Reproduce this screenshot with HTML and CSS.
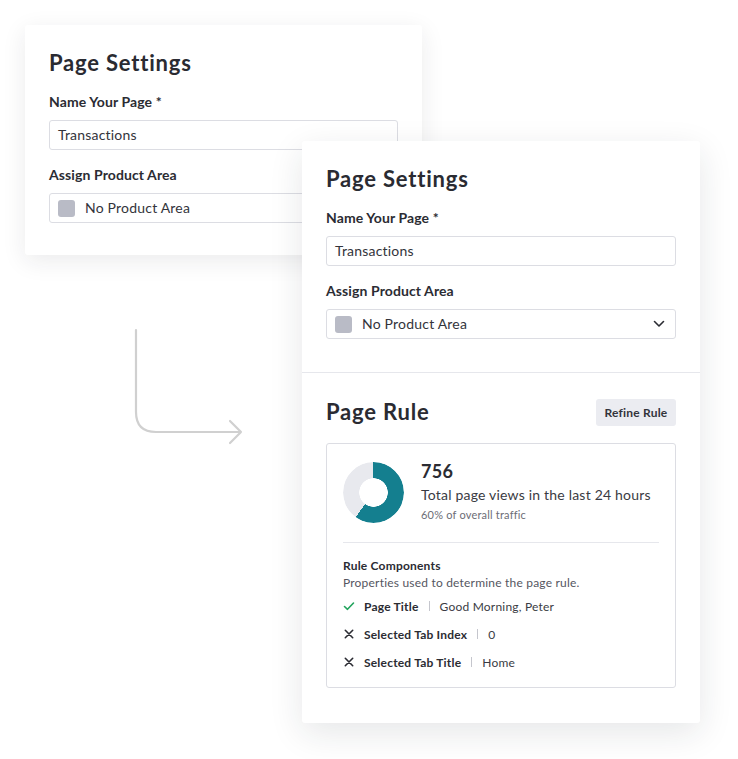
FILE: index.html
```html
<!DOCTYPE html>
<html lang="en">
<head>
  <meta charset="UTF-8">
  <meta name="viewport" content="width=device-width, initial-scale=1.0">
  <title>Page Settings</title>
  <link rel="stylesheet" href="styles.css">
</head>
<body>
  <div class="stage">
    <!-- old settings card, sits behind -->
    <section class="card card-back">
      <div class="settings">
        <h1>Page Settings</h1>
        <label class="field-label">Name Your Page *</label>
        <div class="field">Transactions</div>
        <label class="field-label">Assign Product Area</label>
        <div class="field select">
          <span class="swatch"></span>
          <span>No Product Area</span>
        </div>
      </div>
    </section>

    <svg class="arrow" width="112" height="120" viewBox="0 0 112 120">
      <path d="M3 2 V84 Q3 104 23 104 H108 M97 93 L108 104 L97 115" fill="none" stroke="#d0d0d0" stroke-width="2.2" stroke-linecap="round" stroke-linejoin="round"/>
    </svg>

    <!-- new settings card, sits in front -->
    <section class="card card-front">
      <div class="settings">
        <h1>Page Settings</h1>
        <label class="field-label">Name Your Page *</label>
        <div class="field">Transactions</div>
        <label class="field-label">Assign Product Area</label>
        <div class="field select">
          <span class="swatch"></span>
          <span>No Product Area</span>
          <svg class="chevron" width="12" height="8" viewBox="0 0 12 8">
            <path d="M1.5 1.5 L6 6 L10.5 1.5" fill="none" stroke="#2b2c33" stroke-width="1.6" stroke-linecap="round" stroke-linejoin="round"/>
          </svg>
        </div>
      </div>

      <div class="rule">
        <div class="rule-head">
          <h1>Page Rule</h1>
          <button class="refine-btn">Refine Rule</button>
        </div>

        <div class="rule-box">
          <div class="stats">
            <div class="donut"></div>
            <div class="stats-text">
              <div class="views">756</div>
              <div class="views-label">Total page views in the last 24 hours</div>
              <div class="views-share">60% of overall traffic</div>
            </div>
          </div>

          <div class="components">
            <div class="comp-title">Rule Components</div>
            <div class="comp-desc">Properties used to determine the page rule.</div>
            <ul class="comp-list">
              <li>
                <svg class="icon" width="12" height="12" viewBox="0 0 12 12"><path d="M1.5 6.5 L4.5 9.3 L10.5 3" fill="none" stroke="#22a45d" stroke-width="1.6" stroke-linecap="round" stroke-linejoin="round"/></svg>
                <span class="comp-name">Page Title</span>
                <span class="sep"></span>
                <span class="comp-value">Good Morning, Peter</span>
              </li>
              <li>
                <svg class="icon" width="12" height="12" viewBox="0 0 12 12"><path d="M2.3 2.3 L9.7 9.7 M9.7 2.3 L2.3 9.7" fill="none" stroke="#2b2c33" stroke-width="1.6" stroke-linecap="round"/></svg>
                <span class="comp-name">Selected Tab Index</span>
                <span class="sep"></span>
                <span class="comp-value">0</span>
              </li>
              <li>
                <svg class="icon" width="12" height="12" viewBox="0 0 12 12"><path d="M2.3 2.3 L9.7 9.7 M9.7 2.3 L2.3 9.7" fill="none" stroke="#2b2c33" stroke-width="1.6" stroke-linecap="round"/></svg>
                <span class="comp-name">Selected Tab Title</span>
                <span class="sep"></span>
                <span class="comp-value">Home</span>
              </li>
            </ul>
          </div>
        </div>
      </div>
    </section>
  </div>
</body>
</html>
```

FILE: styles.css
```css
* {
  margin: 0;
  padding: 0;
  box-sizing: border-box;
}

body {
  font-family: 'Lato', 'Open Sans', sans-serif;
  background-color: #ffffff;
  color: #2b2c33;
}

.stage {
  display: grid;
  width: 738px;
  height: 759px;
}

.stage > * {
  grid-area: 1 / 1;
  align-self: start;
  justify-self: start;
}

.card {
  background-color: #ffffff;
  border-radius: 3px;
}

.card-back {
  margin: 25px 0 0 25px;
  width: 397px;
  height: 230px;
  box-shadow: 0 6px 24px rgba(30, 32, 45, 0.09);
}

.card-front {
  margin: 141px 0 0 302px;
  width: 398px;
  height: 582px;
  box-shadow: 0 10px 34px rgba(30, 32, 45, 0.11);
}

.arrow {
  margin: 328px 0 0 133px;
}

.settings {
  padding: 24px 24px 33px 24px;
}

h1 {
  font-size: 22px;
  line-height: 28px;
  font-weight: 700;
  letter-spacing: 0.8px;
  color: #2a2b32;
}

.field-label {
  display: block;
  margin-top: 16px;
  font-size: 14px;
  line-height: 18px;
  font-weight: 700;
  letter-spacing: 0.1px;
}

.field {
  display: flex;
  align-items: center;
  height: 30px;
  margin-top: 9px;
  padding: 0 8px 2px 8px;
  border: 1px solid #dcdde3;
  border-radius: 3px;
  font-size: 14px;
  letter-spacing: 0.2px;
  color: #33343b;
}

.select {
  gap: 10px;
}

.swatch {
  width: 17px;
  height: 17px;
  margin-top: 2px;
  border-radius: 3px;
  background-color: #b9bbc6;
}

.chevron {
  margin-left: auto;
  margin-right: 2px;
  margin-top: 2px;
}

.rule {
  border-top: 1px solid #e6e7ec;
  padding: 25px 24px 0 24px;
}

.rule-head {
  display: flex;
  justify-content: space-between;
  align-items: center;
}

.refine-btn {
  width: 80px;
  height: 27px;
  border: none;
  border-radius: 3px;
  background-color: #ebecf1;
  font-family: inherit;
  font-size: 12px;
  font-weight: 700;
  letter-spacing: 0.2px;
  color: #33343b;
}

.rule-box {
  margin-top: 17px;
  border: 1px solid #dcdde3;
  border-radius: 3px;
  padding: 18px 16px 11px 16px;
}

.stats {
  display: flex;
  gap: 17px;
  padding-bottom: 19px;
  border-bottom: 1px solid #e6e7ec;
}

.stats-text {
  margin-top: -2px;
}

.donut {
  width: 61px;
  height: 61px;
  flex-shrink: 0;
  border-radius: 50%;
  background: conic-gradient(#147f8f 0 60%, #e8e9ee 60% 100%);
  -webkit-mask: radial-gradient(circle, transparent 14px, #000 14.5px);
  mask: radial-gradient(circle, transparent 14px, #000 14.5px);
}

.views {
  font-size: 18px;
  line-height: 22px;
  font-weight: 700;
  letter-spacing: 0.3px;
}

.views-label {
  margin-top: 3px;
  font-size: 14px;
  line-height: 20px;
  letter-spacing: 0.2px;
  color: #3a3b43;
}

.views-share {
  margin-top: 2px;
  font-size: 11px;
  line-height: 16px;
  letter-spacing: 0.2px;
  color: #6c6d76;
}

.components {
  padding-top: 15px;
}

.comp-title {
  font-size: 12px;
  line-height: 16px;
  font-weight: 700;
  letter-spacing: 0.2px;
}

.comp-desc {
  font-size: 12px;
  line-height: 18px;
  letter-spacing: 0.2px;
  color: #55565f;
}

.comp-list {
  list-style: none;
}

.comp-list li {
  display: flex;
  align-items: center;
  height: 28px;
  font-size: 12px;
  letter-spacing: 0.2px;
}

.icon {
  margin-right: 9px;
}

.comp-name {
  font-weight: 700;
}

.sep {
  width: 1px;
  height: 10px;
  margin: 0 10px;
  background-color: #c5c6cd;
}

.comp-value {
  color: #3a3b43;
}
```
